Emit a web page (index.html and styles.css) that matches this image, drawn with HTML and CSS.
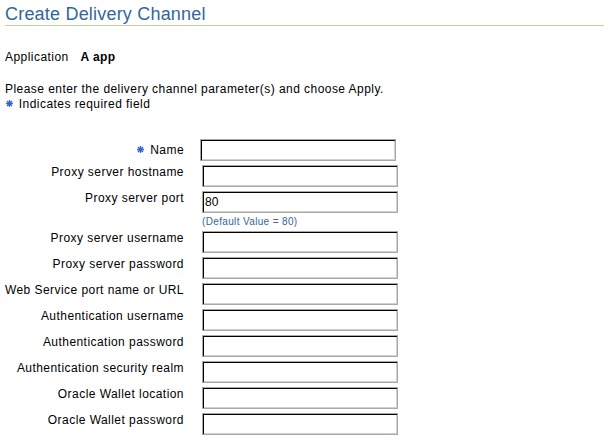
FILE: index.html
```html
<!DOCTYPE html>
<html lang="en">
<head>
    <meta charset="UTF-8">
    <title>Create Delivery Channel</title>
    <link rel="stylesheet" href="styles.css">
</head>
<body>
    <h1 class="page-title">Create Delivery Channel</h1>

    <div class="app-line">
        <span class="app-label">Application</span>
        <span class="app-value">A app</span>
    </div>

    <p class="instructions">
        Please enter the delivery channel parameter(s) and choose Apply.<br>
        <svg class="req-icon" width="7" height="7" viewBox="0 0 7 7"><path d="M0 3.5H7M3.5 0V7M1 1L6 6M6 1L1 6" stroke="#3366cc" stroke-width="1.3"/></svg>
        Indicates required field
    </p>

    <form class="channel-form">
        <label class="field-label field-required" for="name">
            <svg class="req-icon" width="7" height="7" viewBox="0 0 7 7"><path d="M0 3.5H7M3.5 0V7M1 1L6 6M6 1L1 6" stroke="#3366cc" stroke-width="1.3"/></svg>
            Name
        </label>
        <input class="field-input field-input-required" type="text" id="name">

        <label class="field-label" for="proxyHost">Proxy server hostname</label>
        <input class="field-input" type="text" id="proxyHost">

        <label class="field-label" for="proxyPort">Proxy server port</label>
        <input class="field-input" type="text" id="proxyPort" value="80">

        <span></span>
        <span class="field-hint">(Default Value = 80)</span>

        <label class="field-label" for="proxyUser">Proxy server username</label>
        <input class="field-input" type="text" id="proxyUser">

        <label class="field-label" for="proxyPass">Proxy server password</label>
        <input class="field-input" type="password" id="proxyPass">

        <label class="field-label" for="wsPort">Web Service port name or URL</label>
        <input class="field-input" type="text" id="wsPort">

        <label class="field-label" for="authUser">Authentication username</label>
        <input class="field-input" type="text" id="authUser">

        <label class="field-label" for="authPass">Authentication password</label>
        <input class="field-input" type="password" id="authPass">

        <label class="field-label" for="authRealm">Authentication security realm</label>
        <input class="field-input" type="text" id="authRealm">

        <label class="field-label" for="walletLoc">Oracle Wallet location</label>
        <input class="field-input" type="text" id="walletLoc">

        <label class="field-label" for="walletPass">Oracle Wallet password</label>
        <input class="field-input" type="password" id="walletPass">
    </form>
</body>
</html>
```

FILE: styles.css
```css
body {
    font-family: "Liberation Sans", Arial, sans-serif;
    font-size: 12px;
    line-height: 15px;
    letter-spacing: 0.45px;
    color: #000;
    background-color: #fff;
    margin: 0;
    padding: 0 0 0 5px;
}

.page-title {
    font-size: 18px;
    font-weight: normal;
    line-height: 21px;
    letter-spacing: 0.2px;
    color: #336699;
    margin: 4px 0 0 0;
    border-bottom: 1px solid #cccc99;
}

.app-line {
    margin-top: 24px;
}

.app-value {
    font-weight: bold;
    margin-left: 8px;
}

.instructions {
    margin: 17px 0 0 0;
}

.req-icon {
    vertical-align: middle;
    margin: 0 2px 2px 1px;
}

.channel-form {
    display: grid;
    grid-template-columns: 184px 196px;
    column-gap: 18px;
    row-gap: 4px;
    margin: 27px 0 0 -5px;
}

.field-label {
    text-align: right;
    white-space: nowrap;
}

.field-required {
    padding-top: 4px;
}

.field-input {
    box-sizing: border-box;
    width: 196px;
    height: 22px;
    margin: 0;
    padding: 1px 2px;
    font-family: "Liberation Sans", Arial, sans-serif;
    font-size: 12px;
    border: 1px solid #a8a8a8;
    box-shadow: inset 1px 1px 0 #000, inset -1px -1px 0 #d4d0c8;
    background-color: #fff;
    outline: none;
}

.field-input-required {
    margin-left: -2px;
}

.field-hint {
    font-size: 10px;
    line-height: 10px;
    letter-spacing: 0.35px;
    color: #336699;
}
```
